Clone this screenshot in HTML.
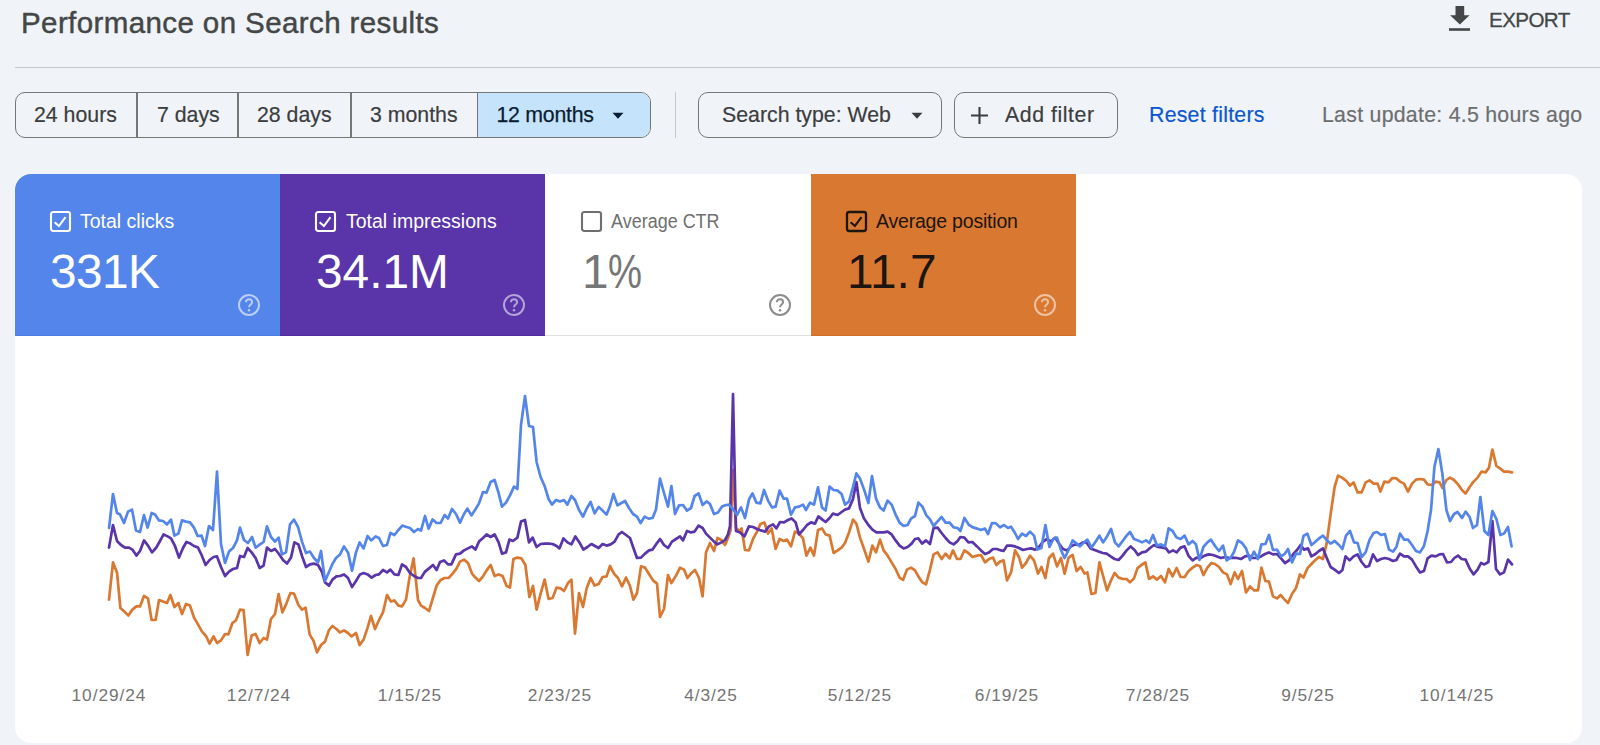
<!DOCTYPE html>
<html><head><meta charset="utf-8">
<style>
*{box-sizing:border-box;margin:0;padding:0}
html,body{width:1600px;height:745px;overflow:hidden;background:#f0f4f9;font-family:"Liberation Sans",sans-serif;position:relative}
.abs{position:absolute;white-space:nowrap}
.title{left:21px;top:6px;font-size:29.5px;letter-spacing:0.4px;color:#444746;-webkit-text-stroke:0.45px #444746}
.export{left:1489px;top:7.5px;font-size:20.6px;color:#444746;letter-spacing:-0.6px;-webkit-text-stroke:0.3px #444746}
.divider{left:15px;top:66.5px;width:1585px;height:1.6px;background:#c4c7c5}
.bt{top:103px;font-size:21.3px;color:#3c3d3e;line-height:25px;-webkit-text-stroke:0.2px currentColor}
.group{left:15px;top:92px;width:636px;height:46px;border:1.6px solid #747775;border-radius:10px;overflow:hidden}
.vd{top:92px;width:1.8px;height:46px;background:#747775}
.btn{top:92px;height:46px;border:1.6px solid #747775;border-radius:10px}
.card{left:15px;top:174px;width:1567px;height:568.5px;background:#fff;border-radius:16px;overflow:hidden}
.tile{top:0;height:162px;width:266px}
.lbl{top:209px;font-size:19.5px;line-height:24px}
.val{top:243.8px;font-size:47.8px;line-height:56px}
.xl{top:685px;font-size:17.3px;letter-spacing:0.95px;color:#747474;line-height:20px;transform:translateX(-50%)}
</style></head><body>
<div class="abs title">Performance on Search results</div>
<svg class="abs" style="left:1449px;top:6px" width="22" height="25" viewBox="0 0 22 25"><path d="M6.5 0h8.7v9.2h5.4l-9.75 9.3-9.75-9.3h5.4z" fill="#444746"/><rect x="0" y="22.2" width="21" height="2.6" fill="#444746"/></svg>
<div class="abs export">EXPORT</div>
<div class="abs divider"></div>

<div class="abs group"><div class="abs" style="left:461px;top:0;width:180px;height:46px;background:#c5e4fc"></div></div>
<div class="abs vd" style="left:136px"></div>
<div class="abs vd" style="left:237px"></div>
<div class="abs vd" style="left:350px"></div>
<div class="abs vd" style="left:476.5px"></div>
<div class="abs bt" style="left:34px">24 hours</div>
<div class="abs bt" style="left:157px">7 days</div>
<div class="abs bt" style="left:257px">28 days</div>
<div class="abs bt" style="left:370px">3 months</div>
<div class="abs bt" style="left:496.5px;color:#0a1d33;letter-spacing:-0.25px;-webkit-text-stroke:0.25px #0a1d33">12 months</div>
<svg class="abs" style="left:612px;top:112px" width="13" height="8" viewBox="0 0 13 8"><path d="M0.5 0.8h11l-5.5 6z" fill="#0a1d33"/></svg>
<div class="abs" style="left:675px;top:92px;width:1.2px;height:46px;background:#c4c7c5"></div>
<div class="abs btn" style="left:698px;width:244px"></div>
<div class="abs bt" style="left:722px">Search type: Web</div>
<svg class="abs" style="left:911px;top:112px" width="13" height="8" viewBox="0 0 13 8"><path d="M0.5 0.8h11l-5.5 6z" fill="#3c3d3e"/></svg>
<div class="abs btn" style="left:954px;width:164px"></div>
<svg class="abs" style="left:970px;top:106px" width="19" height="19" viewBox="0 0 19 19"><path d="M9.5 1v17M1 9.5h17" stroke="#3c3d3e" stroke-width="2.1"/></svg>
<div class="abs bt" style="left:1005px;letter-spacing:0.55px">Add filter</div>
<div class="abs bt" style="left:1149px;color:#0b57d0;letter-spacing:0.25px">Reset filters</div>
<div class="abs bt" style="left:1322px;color:#6d6e6f;letter-spacing:0.27px">Last update: 4.5 hours ago</div>

<div class="abs card">
 <div class="abs tile" style="left:0;background:#5485ea;border-bottom:1.5px solid #4a7be0"></div>
 <div class="abs tile" style="left:265px;background:#5935a9;border-bottom:1.5px solid #4f2d9c"></div>
 <div class="abs tile" style="left:530px;background:#fff;border-bottom:1.6px solid #e0e0e0;width:266px"></div>
 <div class="abs tile" style="left:796px;width:265px;background:#d97831;border-bottom:1.5px solid #d06f28"></div>
</div>
<!-- checkboxes -->
<svg class="abs" style="left:49px;top:210px" width="23" height="23" viewBox="0 0 23 23"><rect x="2" y="2" width="19" height="19" rx="2.2" fill="none" stroke="#fff" stroke-width="2.1"/><path d="M5.6 12.3l4.3 3.7l6.6-8.9" fill="none" stroke="#fff" stroke-width="2"/></svg>
<svg class="abs" style="left:314px;top:210px" width="23" height="23" viewBox="0 0 23 23"><rect x="2" y="2" width="19" height="19" rx="2.2" fill="none" stroke="#fff" stroke-width="2.1"/><path d="M5.6 12.3l4.3 3.7l6.6-8.9" fill="none" stroke="#fff" stroke-width="2"/></svg>
<svg class="abs" style="left:580px;top:210px" width="23" height="23" viewBox="0 0 23 23"><rect x="2" y="2" width="19" height="19" rx="2.2" fill="none" stroke="#6f6f6f" stroke-width="2.1"/></svg>
<svg class="abs" style="left:845px;top:210px" width="23" height="23" viewBox="0 0 23 23"><rect x="2" y="2" width="19" height="19" rx="2.2" fill="none" stroke="#1d1510" stroke-width="2.3"/><path d="M5.6 12.3l4.3 3.7l6.6-8.9" fill="none" stroke="#1d1510" stroke-width="2.1"/></svg>
<div class="abs lbl" style="left:80px;color:#fff">Total clicks</div>
<div class="abs lbl" style="left:346px;color:#fff">Total impressions</div>
<div class="abs lbl" style="left:611px;color:#6f6f6f;transform:scaleX(0.922);transform-origin:left">Average CTR</div>
<div class="abs lbl" style="left:876px;color:#1d1510;letter-spacing:-0.2px">Average position</div>
<div class="abs val" style="left:50px;color:#fff;letter-spacing:-0.6px">331K</div>
<div class="abs val" style="left:316px;color:#fff">34.1M</div>
<div class="abs val" style="left:582px;color:#767676">1<span style="display:inline-block;transform:scaleX(0.8);transform-origin:left;margin-left:-1px">%</span></div>
<div class="abs val" style="left:847px;color:#1d1510">11.7</div>
<!-- help icons -->
<svg class="abs" style="left:237px;top:293px" width="24" height="24" viewBox="0 0 24 24"><g fill="none" stroke="rgba(255,255,255,0.6)" stroke-width="2"><circle cx="12" cy="12" r="10"/><path d="M8.9 9.3c0-1.8 1.4-3.1 3.1-3.1s3.1 1.3 3.1 3c0 2.2-3.1 2.5-3.1 5"/></g><circle cx="12" cy="17.3" r="1.25" fill="rgba(255,255,255,0.6)"/></svg>
<svg class="abs" style="left:502px;top:293px" width="24" height="24" viewBox="0 0 24 24"><g fill="none" stroke="rgba(255,255,255,0.55)" stroke-width="2"><circle cx="12" cy="12" r="10"/><path d="M8.9 9.3c0-1.8 1.4-3.1 3.1-3.1s3.1 1.3 3.1 3c0 2.2-3.1 2.5-3.1 5"/></g><circle cx="12" cy="17.3" r="1.25" fill="rgba(255,255,255,0.55)"/></svg>
<svg class="abs" style="left:768px;top:293px" width="24" height="24" viewBox="0 0 24 24"><g fill="none" stroke="#8c8c8c" stroke-width="2"><circle cx="12" cy="12" r="10"/><path d="M8.9 9.3c0-1.8 1.4-3.1 3.1-3.1s3.1 1.3 3.1 3c0 2.2-3.1 2.5-3.1 5"/></g><circle cx="12" cy="17.3" r="1.25" fill="#8c8c8c"/></svg>
<svg class="abs" style="left:1033px;top:293px" width="24" height="24" viewBox="0 0 24 24"><g fill="none" stroke="rgba(255,255,255,0.55)" stroke-width="2"><circle cx="12" cy="12" r="10"/><path d="M8.9 9.3c0-1.8 1.4-3.1 3.1-3.1s3.1 1.3 3.1 3c0 2.2-3.1 2.5-3.1 5"/></g><circle cx="12" cy="17.3" r="1.25" fill="rgba(255,255,255,0.55)"/></svg>

<div class="abs xl" style="left:109px">10/29/24</div>
<div class="abs xl" style="left:259px">12/7/24</div>
<div class="abs xl" style="left:410px">1/15/25</div>
<div class="abs xl" style="left:560px">2/23/25</div>
<div class="abs xl" style="left:711px">4/3/25</div>
<div class="abs xl" style="left:860px">5/12/25</div>
<div class="abs xl" style="left:1007px">6/19/25</div>
<div class="abs xl" style="left:1158px">7/28/25</div>
<div class="abs xl" style="left:1308px">9/5/25</div>
<div class="abs xl" style="left:1457px">10/14/25</div>
<svg id="chart" class="abs" style="left:0;top:0" width="1600" height="745" viewBox="0 0 1600 745"><path d="M109.0 599.6 L113.0 562.4 L117.0 572.4 L120.4 608.0 L124.4 611.6 L128.4 615.6 L132.4 609.6 L136.4 606.4 L140.0 606.4 L144.0 596.0 L148.0 598.4 L151.6 620.0 L155.6 620.0 L159.0 600.0 L163.0 601.6 L167.0 603.0 L170.4 595.0 L174.4 607.0 L178.4 603.0 L182.0 614.0 L186.0 604.0 L190.0 605.6 L194.0 617.6 L198.0 624.4 L202.0 631.6 L206.0 636.0 L209.6 643.6 L213.6 636.4 L217.0 643.0 L221.0 640.4 L225.0 634.0 L228.4 634.4 L232.4 623.0 L236.0 620.4 L240.0 609.6 L243.6 610.0 L247.6 655.0 L251.6 635.6 L255.6 634.0 L259.6 643.0 L263.6 638.0 L267.0 639.6 L271.0 619.0 L275.0 614.0 L278.6 594.0 L282.4 612.4 L286.4 603.6 L290.4 593.0 L294.0 593.6 L298.4 605.0 L302.0 609.6 L305.6 607.6 L309.6 634.4 L313.6 641.0 L317.0 652.4 L321.0 645.0 L325.0 641.6 L329.0 630.0 L332.4 626.0 L336.4 629.0 L340.0 632.4 L344.0 630.4 L348.0 633.0 L351.6 636.4 L356.0 633.0 L359.6 645.0 L363.6 639.6 L367.6 627.6 L371.0 616.0 L375.0 629.0 L379.0 620.0 L383.0 612.4 L387.0 595.0 L391.0 601.6 L394.4 600.4 L398.4 605.6 L402.0 606.4 L406.0 599.6 L409.6 577.0 L413.6 558.4 L418.0 600.0 L421.0 605.6 L425.0 608.0 L429.0 611.0 L432.6 599.0 L436.6 585.6 L440.6 580.0 L444.6 578.0 L448.6 578.0 L452.6 573.6 L456.6 568.4 L460.0 561.6 L464.0 559.6 L468.0 563.0 L472.0 573.6 L475.4 577.6 L479.0 581.0 L483.0 576.4 L486.6 570.4 L490.6 565.0 L494.6 576.0 L498.6 574.4 L502.6 576.0 L506.6 586.0 L510.0 587.6 L513.4 559.0 L517.4 557.6 L521.4 558.4 L525.4 565.0 L529.4 597.0 L533.0 586.0 L536.6 609.6 L540.6 593.6 L544.6 579.6 L548.6 599.0 L552.6 598.0 L556.6 587.6 L560.6 588.4 L564.0 591.0 L568.0 583.0 L571.4 579.6 L575.0 633.6 L579.0 593.0 L583.0 607.0 L586.6 588.4 L590.6 578.0 L594.6 585.6 L598.6 584.0 L602.6 577.0 L606.6 576.4 L610.0 566.0 L614.0 573.6 L618.0 578.0 L622.0 586.4 L626.0 577.6 L630.0 586.0 L633.4 599.6 L637.0 593.0 L641.0 566.4 L645.0 567.6 L649.0 574.0 L653.0 580.4 L657.0 583.6 L660.0 617.0 L664.0 609.0 L668.0 575.0 L671.4 583.0 L676.0 575.6 L680.0 567.6 L684.0 569.6 L687.4 578.0 L691.0 573.6 L695.0 570.0 L699.0 578.0 L702.6 596.4 L706.0 552.4 L710.0 543.0 L714.0 551.0 L717.4 538.0 L721.4 540.0 L725.0 545.0 L728.0 538.0 L730.6 530.0 L733.0 470.0 L736.0 528.0 L740.0 531.6 L741.6 528.4 L745.0 550.0 L749.0 550.4 L753.0 539.0 L757.0 531.6 L760.4 524.0 L764.4 522.4 L768.0 533.6 L771.6 528.4 L775.6 549.0 L779.6 539.0 L783.6 541.0 L787.0 539.6 L791.0 546.4 L795.0 531.6 L799.0 533.6 L803.0 538.4 L806.4 555.6 L810.4 547.6 L814.0 555.6 L818.0 530.0 L822.0 528.4 L825.6 534.4 L829.6 535.6 L833.6 553.0 L837.6 550.4 L841.6 547.6 L845.0 543.0 L849.0 532.4 L853.0 519.6 L856.4 523.6 L860.0 537.6 L864.4 550.0 L868.4 561.6 L872.4 545.6 L876.0 552.4 L880.0 539.6 L883.6 550.4 L887.6 555.6 L891.6 562.4 L895.6 569.0 L899.6 577.6 L903.0 580.0 L907.0 569.6 L911.0 567.6 L915.0 570.4 L918.4 576.4 L922.4 582.4 L926.0 584.4 L930.0 569.6 L933.6 554.4 L937.6 552.4 L941.6 559.0 L945.6 553.6 L949.6 558.4 L953.0 550.4 L957.0 559.0 L960.4 559.0 L964.4 550.4 L968.4 553.0 L972.4 557.0 L977.0 555.6 L981.0 555.0 L985.0 562.4 L989.0 559.0 L993.0 557.6 L996.4 565.0 L1000.0 561.6 L1003.6 560.4 L1007.0 580.4 L1011.0 572.4 L1015.0 550.4 L1019.0 557.0 L1022.0 567.6 L1026.0 563.0 L1030.0 555.6 L1034.0 560.4 L1038.0 573.6 L1041.4 567.0 L1045.4 578.0 L1049.0 558.0 L1053.0 553.6 L1057.0 566.4 L1061.0 558.0 L1064.6 573.6 L1068.6 557.6 L1072.6 555.0 L1076.6 571.0 L1080.6 567.0 L1084.6 573.6 L1087.4 572.4 L1091.4 594.0 L1095.4 593.0 L1099.4 562.4 L1103.0 575.6 L1107.0 590.4 L1111.0 580.4 L1114.6 573.0 L1118.6 577.6 L1123.0 579.0 L1126.6 579.0 L1130.0 582.4 L1134.0 578.4 L1137.4 568.4 L1141.4 565.0 L1145.4 562.4 L1149.0 579.0 L1153.0 576.4 L1157.0 579.6 L1161.0 576.0 L1165.0 582.4 L1168.6 569.0 L1172.6 576.4 L1176.6 568.0 L1180.6 577.0 L1184.6 577.0 L1188.6 571.0 L1192.6 567.6 L1196.6 565.0 L1200.0 566.0 L1203.4 575.0 L1207.4 567.6 L1211.4 563.0 L1215.0 564.0 L1219.0 567.0 L1223.0 572.4 L1227.0 574.4 L1230.6 584.0 L1234.6 572.4 L1238.0 579.0 L1242.0 571.0 L1246.0 592.4 L1250.0 586.4 L1254.0 590.4 L1258.0 590.4 L1261.4 567.6 L1265.4 581.0 L1269.0 581.6 L1273.0 596.4 L1277.0 598.4 L1280.6 595.0 L1284.6 599.6 L1288.0 603.0 L1292.0 594.0 L1296.0 588.0 L1300.0 574.4 L1303.4 577.6 L1307.4 568.4 L1311.4 564.0 L1315.0 560.4 L1319.0 557.0 L1323.0 559.0 L1326.6 543.6 L1330.6 514.4 L1334.6 487.0 L1338.0 475.6 L1342.0 477.6 L1346.4 481.0 L1350.0 485.6 L1353.6 482.4 L1357.6 492.4 L1361.6 492.4 L1365.6 482.4 L1369.6 480.4 L1373.6 483.6 L1377.6 483.6 L1380.4 491.6 L1384.4 481.6 L1388.4 482.4 L1392.4 478.0 L1396.4 478.4 L1400.0 481.6 L1404.0 483.6 L1408.0 491.6 L1412.0 483.6 L1416.0 479.6 L1420.0 479.0 L1424.0 479.6 L1427.6 484.4 L1431.6 485.0 L1435.6 481.6 L1439.6 482.4 L1442.4 488.0 L1446.4 480.0 L1450.0 477.6 L1454.0 480.0 L1458.0 484.4 L1462.0 490.0 L1465.6 493.6 L1469.6 487.0 L1473.6 481.6 L1477.6 477.6 L1481.6 471.6 L1485.6 472.4 L1489.0 467.6 L1492.4 449.6 L1496.4 466.0 L1500.0 468.4 L1504.0 471.6 L1508.0 471.6 L1512.0 472.4" fill="none" stroke="#d97831" stroke-width="2.7" stroke-linejoin="round" stroke-linecap="round"/><path d="M109.0 547.6 L113.0 525.0 L117.0 541.0 L121.0 545.0 L125.0 547.6 L129.0 547.6 L132.4 549.6 L136.4 555.6 L140.0 551.0 L144.0 540.4 L148.0 545.6 L152.0 552.4 L156.0 548.0 L160.0 541.0 L163.6 534.4 L167.6 536.4 L171.0 538.4 L175.0 546.0 L179.0 557.6 L183.0 548.0 L186.4 542.0 L190.4 543.6 L194.0 546.0 L198.0 547.6 L201.6 555.0 L205.6 565.0 L209.6 560.0 L213.6 557.0 L217.0 556.4 L221.0 567.0 L225.0 576.0 L229.0 571.6 L233.0 569.0 L237.0 568.0 L240.0 556.0 L244.0 557.0 L247.6 548.0 L251.6 552.4 L255.6 558.0 L259.6 568.0 L263.6 565.6 L267.0 547.6 L271.0 551.0 L275.0 549.0 L279.0 554.0 L283.0 560.0 L287.0 563.6 L291.0 557.6 L294.4 542.4 L298.4 544.4 L302.0 556.0 L306.0 567.0 L310.0 564.4 L314.0 563.6 L318.0 565.0 L322.0 572.0 L325.0 582.4 L329.0 585.6 L332.4 579.6 L336.4 576.4 L340.0 576.0 L344.0 574.4 L348.0 578.0 L352.0 587.0 L356.0 581.0 L360.0 574.4 L363.6 573.0 L367.6 574.4 L371.6 577.6 L375.6 575.0 L379.0 574.4 L383.0 570.0 L387.0 572.4 L390.4 569.6 L394.4 574.4 L398.4 575.0 L402.0 564.4 L406.0 567.0 L410.0 573.0 L414.0 576.0 L418.0 578.0 L421.0 578.0 L425.0 571.6 L429.0 568.4 L433.0 565.0 L436.6 570.0 L440.0 562.0 L444.0 560.4 L448.0 564.4 L451.4 564.4 L456.0 554.4 L460.0 553.6 L464.0 550.4 L468.0 548.4 L472.0 546.4 L475.4 549.6 L479.0 541.6 L483.0 538.0 L486.6 534.4 L490.6 537.0 L494.6 534.4 L498.6 542.4 L502.0 553.6 L506.0 552.4 L509.4 539.6 L513.0 541.0 L517.4 537.6 L521.0 521.6 L525.0 520.0 L529.0 542.4 L532.6 537.6 L536.6 547.0 L540.6 544.0 L544.6 543.6 L548.6 543.6 L552.6 544.0 L556.6 546.0 L559.4 548.4 L563.4 538.4 L567.4 542.4 L571.4 544.4 L575.4 536.4 L579.4 542.4 L583.4 549.6 L587.4 547.0 L591.4 544.0 L595.0 546.0 L598.6 548.0 L602.6 544.0 L606.6 545.6 L610.6 544.4 L614.6 541.6 L618.6 534.4 L622.0 532.0 L626.0 535.0 L630.0 538.0 L633.4 548.0 L637.0 558.0 L641.0 557.6 L645.0 553.6 L649.0 550.4 L652.6 549.6 L656.6 543.6 L660.0 539.0 L664.0 545.0 L668.0 548.0 L672.0 541.6 L676.0 539.0 L680.0 536.4 L683.0 540.4 L687.0 531.0 L691.0 532.4 L694.6 531.6 L698.6 525.6 L702.6 528.0 L706.0 533.6 L710.0 537.6 L714.0 541.6 L717.4 544.4 L721.4 542.4 L725.0 540.0 L728.0 534.4 L730.0 526.0 L733.0 394.0 L736.0 531.0 L740.0 532.4 L744.4 536.4 L749.0 526.4 L753.0 527.0 L757.0 529.0 L761.0 530.4 L765.0 531.6 L769.0 526.4 L773.0 524.4 L776.4 528.4 L780.0 522.0 L784.0 522.4 L788.0 520.0 L791.6 518.4 L795.6 522.4 L799.0 534.4 L803.0 530.0 L807.0 525.0 L811.0 522.4 L815.0 523.6 L818.4 516.4 L822.4 519.6 L825.6 522.0 L829.6 518.0 L833.0 513.6 L837.6 515.0 L841.6 512.0 L845.0 509.6 L849.0 508.4 L853.0 499.0 L856.4 482.0 L860.0 508.0 L864.0 518.4 L868.4 525.0 L872.4 529.6 L876.4 532.4 L880.0 532.4 L883.6 532.4 L887.6 531.6 L891.6 534.4 L895.6 540.4 L899.6 545.6 L903.6 548.4 L907.6 547.0 L911.6 543.6 L915.0 539.0 L918.4 538.4 L922.0 543.6 L926.0 540.4 L930.0 544.0 L933.6 528.0 L937.6 527.6 L941.6 533.0 L945.6 538.0 L949.6 542.4 L953.6 544.4 L957.6 541.0 L960.4 537.0 L964.4 537.6 L968.4 542.4 L972.4 542.0 L977.0 546.4 L981.0 550.4 L985.0 554.0 L989.0 552.4 L993.0 549.0 L997.0 549.0 L1001.0 550.4 L1003.6 551.0 L1007.0 545.6 L1011.0 545.6 L1015.0 546.4 L1019.0 548.0 L1023.0 550.0 L1027.0 549.0 L1031.0 548.4 L1035.0 549.6 L1039.0 547.0 L1043.0 541.6 L1047.0 539.0 L1051.0 541.6 L1055.0 537.6 L1059.0 543.6 L1063.0 549.0 L1067.0 550.4 L1071.0 546.4 L1075.0 544.4 L1079.0 545.0 L1083.0 542.4 L1086.6 542.4 L1090.6 548.4 L1094.6 550.0 L1098.6 551.6 L1102.6 553.0 L1106.6 553.6 L1110.6 556.4 L1114.6 559.0 L1118.6 560.0 L1122.6 555.6 L1126.6 550.4 L1130.6 546.4 L1134.6 550.0 L1138.0 555.0 L1142.0 552.4 L1146.0 551.6 L1150.0 548.0 L1154.0 545.0 L1158.0 547.0 L1162.6 547.6 L1166.0 548.4 L1169.0 552.4 L1173.0 550.4 L1176.6 552.4 L1180.6 547.6 L1184.6 546.4 L1188.6 556.0 L1192.6 560.4 L1196.6 557.6 L1200.6 558.0 L1204.6 555.6 L1208.6 554.4 L1213.0 555.0 L1217.0 556.4 L1221.0 558.0 L1225.0 557.0 L1229.0 558.0 L1233.0 557.6 L1237.0 558.0 L1241.0 559.0 L1245.0 556.4 L1249.0 555.6 L1253.0 558.0 L1257.0 558.0 L1261.0 556.4 L1265.0 554.0 L1269.0 552.4 L1273.0 554.4 L1277.0 554.0 L1281.0 558.4 L1285.0 563.0 L1289.0 560.4 L1293.0 554.4 L1297.0 550.0 L1300.6 545.0 L1304.0 549.6 L1308.0 548.4 L1311.4 556.4 L1315.4 554.0 L1319.0 551.0 L1323.0 548.4 L1326.6 557.6 L1330.6 567.0 L1334.6 569.6 L1339.0 573.0 L1342.4 570.0 L1345.6 556.4 L1349.6 560.4 L1353.6 556.4 L1357.6 554.4 L1361.6 562.0 L1365.6 567.0 L1369.0 566.0 L1373.0 554.4 L1377.0 561.0 L1381.0 559.0 L1385.0 558.0 L1389.0 559.0 L1393.0 561.0 L1396.4 560.0 L1400.0 553.6 L1404.0 556.4 L1408.0 556.4 L1412.0 559.6 L1416.0 566.4 L1420.0 572.4 L1424.0 571.0 L1427.6 558.4 L1431.6 555.6 L1435.6 556.4 L1439.6 554.4 L1443.0 554.0 L1447.0 562.4 L1451.0 562.0 L1454.4 558.0 L1458.0 555.6 L1461.6 559.0 L1465.6 559.6 L1469.6 568.4 L1473.6 574.4 L1477.6 569.6 L1481.0 563.0 L1484.4 564.4 L1488.4 562.0 L1492.4 521.0 L1496.0 569.0 L1500.0 574.4 L1504.0 572.4 L1508.0 559.6 L1512.0 564.4" fill="none" stroke="#5935a9" stroke-width="2.7" stroke-linejoin="round" stroke-linecap="round"/><path d="M109.0 528.0 L113.0 494.0 L117.0 513.0 L120.0 514.4 L124.0 523.0 L128.0 511.6 L132.0 509.6 L136.0 530.4 L140.0 532.0 L144.0 515.0 L147.6 527.6 L151.6 513.0 L155.0 514.4 L159.0 520.4 L163.0 521.0 L167.0 524.4 L171.0 519.6 L174.4 535.6 L178.4 533.6 L182.0 520.4 L186.0 521.6 L190.0 522.4 L194.0 527.6 L197.6 536.0 L201.6 535.6 L205.0 546.0 L209.0 526.0 L213.0 530.0 L217.0 471.6 L221.0 544.0 L225.0 563.0 L229.0 551.6 L233.0 548.0 L237.0 540.4 L240.0 527.6 L244.0 540.0 L248.0 543.0 L252.0 537.0 L255.6 547.6 L260.0 544.4 L263.6 542.0 L267.0 526.4 L271.0 537.0 L275.0 541.6 L278.6 537.6 L282.0 554.4 L286.0 552.4 L290.0 524.4 L294.0 519.6 L298.0 527.0 L302.0 541.6 L306.0 553.0 L310.0 551.6 L314.0 558.0 L318.0 562.4 L321.0 551.0 L325.0 581.0 L329.0 572.0 L332.4 564.0 L336.0 558.0 L340.0 554.4 L344.0 546.4 L348.0 552.4 L352.0 570.6 L356.0 552.4 L359.6 542.4 L363.6 548.4 L367.6 536.0 L371.2 540.4 L375.6 536.4 L379.0 538.0 L383.0 546.0 L387.0 545.0 L390.4 533.0 L394.4 535.0 L398.4 530.0 L402.4 525.6 L406.4 527.0 L410.0 528.0 L414.0 532.0 L418.0 529.0 L421.0 530.6 L425.0 516.0 L428.6 528.6 L432.6 519.4 L436.6 523.0 L440.6 523.0 L444.6 515.0 L448.0 518.6 L452.0 509.0 L456.0 514.0 L460.0 522.6 L464.0 514.0 L467.4 508.6 L471.4 515.4 L475.0 510.0 L479.0 503.4 L483.0 492.0 L486.6 492.6 L490.6 482.0 L494.6 480.0 L498.6 493.0 L502.0 506.6 L506.0 502.6 L510.0 495.4 L514.0 486.6 L517.4 489.0 L521.0 425.0 L525.0 396.0 L529.0 426.0 L533.0 427.0 L536.6 462.0 L540.6 477.0 L544.6 486.0 L548.6 499.0 L552.0 504.6 L556.0 500.0 L560.0 501.4 L564.0 500.0 L567.4 504.6 L571.4 496.0 L575.0 500.0 L579.0 510.0 L583.0 516.6 L587.0 508.0 L590.6 502.0 L594.6 513.4 L598.6 507.0 L602.6 510.6 L606.6 514.6 L610.0 506.0 L613.4 494.0 L617.4 505.4 L621.4 503.0 L625.0 501.0 L629.0 508.0 L633.0 514.0 L637.0 516.6 L640.6 523.0 L644.6 516.6 L648.6 518.6 L652.6 518.0 L656.0 509.4 L660.0 478.6 L664.0 493.0 L668.0 506.6 L671.4 486.0 L675.0 514.0 L679.0 505.4 L683.0 505.0 L687.0 510.6 L691.0 508.0 L694.6 496.0 L698.6 493.4 L702.6 505.0 L706.6 501.4 L710.0 504.0 L714.0 514.0 L718.0 512.6 L722.0 506.6 L726.0 505.0 L729.0 504.6 L733.0 509.0 L737.0 515.0 L741.0 507.4 L745.0 518.0 L749.0 499.4 L752.4 493.4 L756.4 502.6 L760.4 503.4 L764.0 490.0 L768.0 500.6 L772.0 507.4 L775.6 506.6 L779.6 490.6 L783.6 498.6 L787.0 498.6 L791.0 514.6 L795.0 507.4 L799.0 506.6 L803.0 504.6 L806.0 510.0 L810.0 502.6 L814.0 504.6 L818.0 487.4 L822.0 507.4 L825.6 510.6 L829.6 486.6 L833.6 490.0 L837.6 490.6 L841.6 494.0 L845.0 504.6 L849.0 501.4 L853.0 487.0 L856.4 473.4 L860.0 478.6 L864.0 489.4 L868.4 503.0 L872.0 476.0 L876.0 498.6 L880.0 507.4 L883.6 510.6 L887.6 500.6 L891.6 504.6 L895.6 514.6 L899.6 522.6 L903.6 526.0 L907.6 525.0 L911.0 518.6 L915.0 516.0 L918.4 502.6 L922.4 506.6 L926.4 515.4 L930.0 519.4 L933.6 526.0 L937.6 521.4 L941.6 517.0 L945.6 522.6 L949.6 522.6 L953.6 527.4 L957.6 528.0 L960.4 531.0 L964.4 518.0 L969.0 525.0 L973.0 527.4 L977.0 528.6 L981.0 530.0 L985.0 528.6 L988.0 534.0 L992.0 523.0 L996.0 523.4 L1000.0 527.4 L1004.0 525.0 L1008.0 528.0 L1011.0 526.6 L1015.0 533.0 L1018.0 539.0 L1022.0 533.6 L1026.0 536.0 L1030.0 531.6 L1034.0 535.6 L1037.4 549.6 L1041.4 548.0 L1045.4 525.0 L1049.4 547.0 L1053.4 539.0 L1057.0 537.6 L1061.0 550.0 L1064.6 558.0 L1068.6 550.0 L1072.6 540.4 L1076.6 543.6 L1080.0 546.4 L1084.0 542.4 L1087.4 539.6 L1091.4 547.6 L1095.4 542.0 L1099.4 535.6 L1103.0 542.4 L1107.0 536.4 L1111.0 529.0 L1115.0 542.4 L1118.6 546.4 L1122.6 541.0 L1126.6 535.6 L1130.0 532.0 L1134.0 539.0 L1138.0 540.4 L1142.0 542.4 L1146.0 540.4 L1149.4 543.0 L1153.0 535.0 L1157.0 545.6 L1161.0 544.4 L1165.0 546.4 L1168.6 528.4 L1172.6 531.0 L1176.6 537.6 L1180.6 539.0 L1184.6 535.6 L1188.6 544.4 L1192.6 541.0 L1196.0 544.4 L1199.4 560.0 L1203.4 547.0 L1207.4 542.4 L1211.0 539.6 L1215.0 546.0 L1219.0 551.0 L1223.0 545.6 L1226.6 560.4 L1230.6 557.6 L1234.0 552.0 L1238.0 540.4 L1242.0 543.0 L1246.0 548.4 L1250.0 560.0 L1254.0 551.6 L1258.0 559.0 L1261.4 544.4 L1265.4 544.0 L1269.0 535.0 L1273.0 550.0 L1277.0 549.6 L1281.0 556.4 L1284.6 554.0 L1288.0 549.0 L1292.0 562.4 L1296.0 553.6 L1300.0 554.0 L1303.4 536.0 L1307.4 533.6 L1311.4 545.0 L1315.0 542.0 L1319.0 538.4 L1323.0 535.6 L1327.0 540.4 L1330.6 543.6 L1334.6 541.0 L1339.0 545.0 L1342.4 549.0 L1346.0 535.6 L1350.0 531.0 L1354.0 542.4 L1357.6 543.0 L1361.6 557.0 L1365.6 552.4 L1369.6 539.6 L1373.6 533.0 L1377.0 532.0 L1381.0 535.0 L1385.0 534.0 L1389.0 549.6 L1393.0 551.6 L1396.4 547.0 L1400.0 533.6 L1404.0 539.6 L1408.0 539.6 L1412.0 545.0 L1416.0 551.0 L1420.0 552.4 L1424.0 546.0 L1427.6 531.0 L1431.0 510.0 L1434.4 467.0 L1438.4 449.0 L1442.4 474.0 L1446.4 510.0 L1450.0 521.0 L1454.0 514.0 L1457.6 512.0 L1462.0 518.0 L1465.6 511.6 L1469.6 517.0 L1473.0 528.0 L1477.0 525.0 L1480.4 497.0 L1484.4 531.0 L1488.4 535.0 L1492.4 511.0 L1496.4 519.0 L1500.4 535.0 L1504.0 533.6 L1508.0 527.0 L1511.6 546.4" fill="none" stroke="#5485ea" stroke-width="2.7" stroke-linejoin="round" stroke-linecap="round"/></svg>
</body></html>
